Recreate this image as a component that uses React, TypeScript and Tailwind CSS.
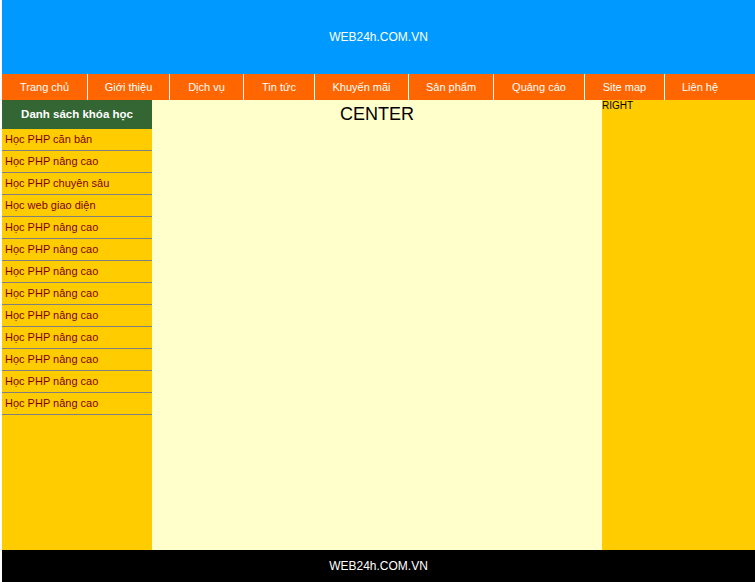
import React from 'react';

const menu = [
  { label: 'Trang chủ', w: 'w-[86px]' },
  { label: 'Giới thiệu', w: 'w-[82px]' },
  { label: 'Dịch vụ', w: 'w-[74px]' },
  { label: 'Tin tức', w: 'w-[71px]' },
  { label: 'Khuyến mãi', w: 'w-[94px]' },
  { label: 'Sản phẩm', w: 'w-[85px]' },
  { label: 'Quảng cáo', w: 'w-[91px]' },
  { label: 'Site map', w: 'w-[80px]' },
  { label: 'Liên hệ', w: 'w-[70px]' },
];

const courses = [
  'Học PHP căn bản',
  'Học PHP nâng cao',
  'Học PHP chuyên sâu',
  'Học web giao diện',
  'Học PHP nâng cao',
  'Học PHP nâng cao',
  'Học PHP nâng cao',
  'Học PHP nâng cao',
  'Học PHP nâng cao',
  'Học PHP nâng cao',
  'Học PHP nâng cao',
  'Học PHP nâng cao',
  'Học PHP nâng cao',
];

export default function App() {
  return (
    <div className="w-[755px] h-[582px] overflow-hidden bg-white pl-[2px] font-['Liberation_Sans',Arial,sans-serif] text-[12px]">
      <div className="flex flex-col h-full">
        {/* header */}
        <div className="h-[74px] bg-[#0099ff] flex items-center justify-center text-white text-[12px] pb-[1px]">
          WEB24h.COM.VN
        </div>

        {/* menu */}
        <div className="h-[26px] bg-[#ff6600] flex text-[11px]">
          {menu.map((m, i) => (
            <div
              key={i}
              className={`${m.w} flex items-center justify-center text-white ${i < menu.length - 1 ? 'border-r border-white' : ''}`}
            >
              {m.label}
            </div>
          ))}
        </div>

        <div className="flex h-[450px]">
          {/* left */}
          <div className="w-[150px] bg-[#ffcc00]">
            <div className="h-[29px] bg-[#336633] text-white font-bold text-[11.5px] flex items-center justify-center">
              Danh sách khóa học
            </div>
            {courses.map((c, i) => (
              <div key={i} className="h-[22px] border-b border-[#808080] text-[#800000] text-[11px] pl-[3px] flex items-center">
                {c}
              </div>
            ))}
          </div>

          {/* center */}
          <div className="w-[450px] bg-[#ffffcc] text-center text-black text-[18px] leading-[28px]">
            CENTER
          </div>

          {/* right */}
          <div className="flex-1 bg-[#ffcc00] text-[10px] leading-[11px] text-black">
            RIGHT
          </div>
        </div>

        {/* footer */}
        <div className="flex-1 bg-black flex items-start justify-center text-white text-[12px] pt-[7px]">
          WEB24h.COM.VN
        </div>
      </div>
    </div>
  );
}
